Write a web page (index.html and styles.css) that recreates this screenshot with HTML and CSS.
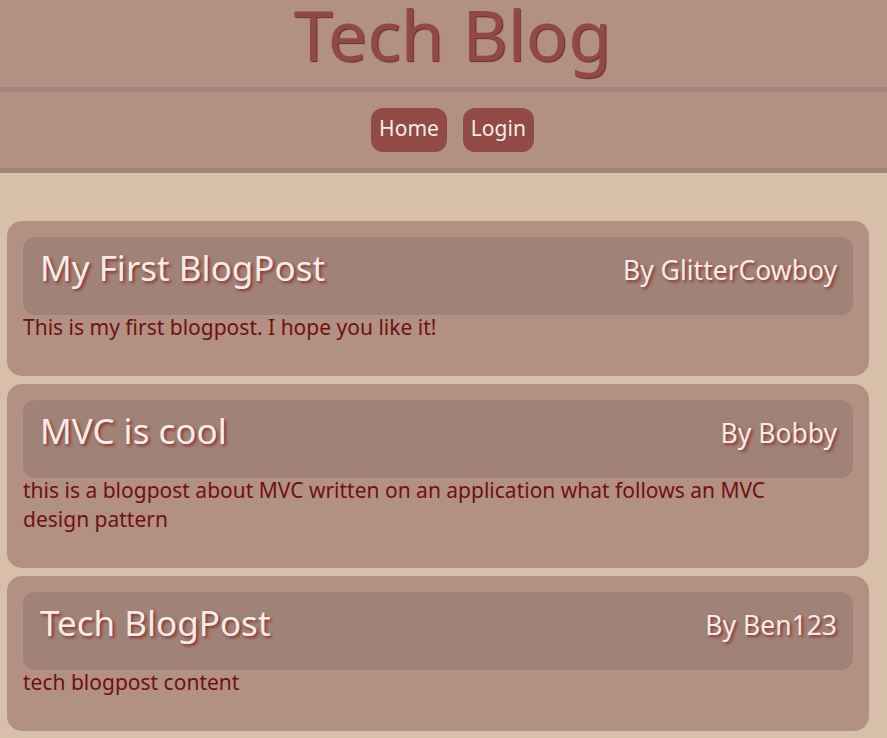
FILE: index.html
```html
<!DOCTYPE html>
<html lang="en">
<head>
<meta charset="utf-8">
<title>Tech Blog</title>
<link rel="stylesheet" href="styles.css">
</head>
<body>
<header class="site-header">
  <h1 class="site-title">Tech Blog</h1>
</header>
<nav class="site-nav">
  <a class="nav-btn" href="#">Home</a>
  <a class="nav-btn" href="#">Login</a>
</nav>
<main class="posts">
  <article class="post">
    <div class="post-head">
      <h2 class="post-title">My First BlogPost</h2>
      <span class="post-author">By GlitterCowboy</span>
    </div>
    <p class="post-body">This is my first blogpost. I hope you like it!</p>
  </article>
  <article class="post">
    <div class="post-head">
      <h2 class="post-title">MVC is cool</h2>
      <span class="post-author">By Bobby</span>
    </div>
    <p class="post-body">this is a blogpost about MVC written on an application what follows an MVC design pattern</p>
  </article>
  <article class="post">
    <div class="post-head">
      <h2 class="post-title">Tech BlogPost</h2>
      <span class="post-author">By Ben123</span>
    </div>
    <p class="post-body">tech blogpost content</p>
  </article>
</main>
</body>
</html>
```
FILE: styles.css
```css
* { box-sizing: border-box; }

html, body {
  margin: 0;
  padding: 0;
}

body {
  background: #d7bfa9;
  font-family: "Noto Sans", "Open Sans", sans-serif;
  overflow: hidden;
}

.site-header {
  background: #b39084;
  height: 92px;
  border-bottom: 5px solid #a2857a;
  padding-left: 18px;
  display: flex;
  justify-content: center;
}

.site-title {
  margin: 0;
  font-weight: 400;
  font-size: 70px;
  line-height: 68px;
  color: #914943;
  text-shadow: 1px 1px 1px #6f2a26;
}

.site-nav {
  background: #b39084;
  height: 81px;
  border-bottom: 5px solid #a2857a;
  padding: 16px 0 0 18px;
  display: flex;
  justify-content: center;
  gap: 16px;
}

.nav-btn {
  display: flex;
  align-items: center;
  justify-content: center;
  height: 44px;
  padding: 0 8px 4px;
  border-radius: 12px;
  background: #914a44;
  color: #f7ece8;
  font-size: 21px;
  text-decoration: none;
}

.posts {
  display: flex;
  flex-direction: column;
  gap: 8px;
  padding: 48px 18px 8px 7px;
}

.post {
  background: #b39084;
  border-radius: 15px;
  padding: 16px;
}

.post-head {
  background: #a08276;
  border-radius: 12px;
  height: 78px;
  padding: 11px 16px 0 17px;
  display: flex;
  align-items: flex-start;
  justify-content: space-between;
}

.post-title {
  margin: 0;
  font-weight: 400;
  font-size: 35px;
  line-height: 40px;
  color: #f8ece8;
  text-shadow: 2px 2px 3px #8b3535;
}

.post-author {
  margin-top: 5px;
  font-size: 26.5px;
  line-height: 34px;
  color: #f8ece8;
  text-shadow: 2px 2px 3px #8b3535;
}

.post-body {
  margin: -2px 0 18px 0;
  padding-right: 24px;
  font-size: 21px;
  line-height: 29px;
  color: #70100f;
}
```
